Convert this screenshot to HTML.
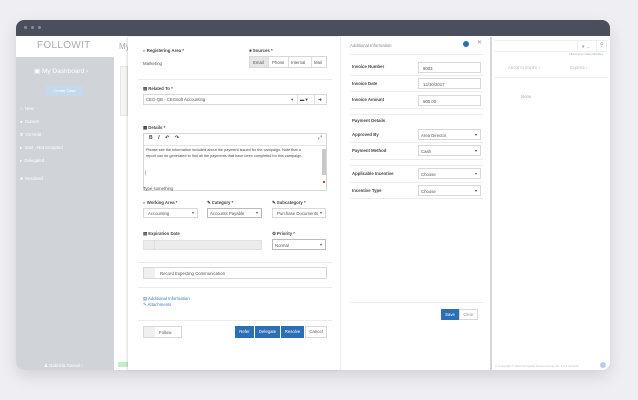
<!DOCTYPE html>
<html><head><meta charset="utf-8"><style>
*{margin:0;padding:0;box-sizing:border-box}
body{width:638px;height:400px;background:#efeff3;font-family:"Liberation Sans",sans-serif;position:relative;overflow:hidden;color:#555}
.a{position:absolute}
.t{position:absolute;font-size:4.3px;white-space:nowrap;line-height:5px}
.b{font-weight:bold;color:#444}
.in{position:absolute;border:1px solid #d8d8d8;background:#fff}
.dv{position:absolute;height:1px;background:#ececec}
.car{position:absolute;right:3px;top:50%;margin-top:-1px;border-left:1.5px solid transparent;border-right:1.5px solid transparent;border-top:2px solid #555}
.btn{position:absolute;background:#2d6fb5;color:#fff;font-size:4.3px;text-align:center;line-height:12px}
</style></head><body>
<div class="a" style="left:16px;top:20px;width:594px;height:350px;border-radius:8px;background:#fff;box-shadow:0 6px 16px rgba(0,0,0,.12);overflow:hidden">
 <div class="a" style="left:0;top:0;width:594px;height:16px;background:#4b4e5c"></div>
 <div class="a" style="left:8px;top:6px;width:3px;height:3px;border-radius:2px;background:#8a8d98"></div>
 <div class="a" style="left:15px;top:6px;width:3px;height:3px;border-radius:2px;background:#8a8d98"></div>
 <div class="a" style="left:22px;top:6px;width:3px;height:3px;border-radius:2px;background:#8a8d98"></div>
 <div class="a" style="left:0;top:37px;width:98px;height:313px;background:#d0d4d9"></div>
</div>
<div class="t" style="left:37px;top:40px;font-size:10px;line-height:12px;color:#aaa;letter-spacing:.3px">FOLLOWIT</div>
<div class="t" style="left:34px;top:68px;font-size:6.5px;line-height:7px;color:#fff">&#9635; My Dashboard &#8250;</div>
<div class="a" style="left:46px;top:85px;width:37px;height:11px;background:#c4d9ec;color:#fff;font-size:4px;text-align:center;line-height:11px">Create Case</div>
<div class="t" style="left:20px;top:106px;color:#fff">○ &nbsp;New</div>
<div class="t" style="left:20px;top:119px;color:#fff">● &nbsp;Current</div>
<div class="t" style="left:20px;top:132px;color:#fff">⧗ &nbsp;On Hold</div>
<div class="t" style="left:20px;top:145px;color:#fff">▸ &nbsp;Sent - Not Accepted</div>
<div class="t" style="left:20px;top:158px;color:#fff">▸ &nbsp;Delegated</div>
<div class="t" style="left:20px;top:176px;color:#fff">■ &nbsp;Resolved</div>
<div class="t" style="left:44px;top:363px;color:#fff">&#9823; Gabriela Goecel &#8250;</div>
<div class="t" style="left:119px;top:42px;font-size:8px;line-height:9px;color:#aaa">My</div>
<div class="a" style="left:120px;top:66px;width:8px;height:50px;background:#f5f5f5;border:1px solid #e6e6e6"></div>
<div class="a" style="left:118px;top:362px;width:10px;height:5px;background:#c8ecc8"></div>

<!-- panel 1 -->
<div class="a" style="left:128px;top:37px;width:212px;height:333px;background:#fff;box-shadow:-1px 0 2px rgba(0,0,0,.15)"></div>
<div class="t b" style="left:143px;top:48px">◐ Registering Area *</div>
<div class="t" style="left:143px;top:61px">Marketing</div>
<div class="t b" style="left:249px;top:48px">■ Sources *</div>
<div class="in" style="left:249px;top:56px;width:78px;height:12px;background:#fff"></div>
<div class="a" style="left:250px;top:57px;width:18px;height:10px;background:#e6e6e6"></div>
<div class="t" style="left:253px;top:60px">Email</div><div class="t" style="left:272px;top:60px">Phone</div><div class="t" style="left:291px;top:60px">Internal</div><div class="t" style="left:314px;top:60px">Mail</div>
<div class="a" style="left:268px;top:57px;width:1px;height:10px;background:#ddd"></div><div class="a" style="left:288px;top:57px;width:1px;height:10px;background:#ddd"></div><div class="a" style="left:311px;top:57px;width:1px;height:10px;background:#ddd"></div>
<div class="dv" style="left:138px;top:79px;width:194px"></div>
<div class="t b" style="left:143px;top:86px">▤ Related To *</div>
<div class="in" style="left:143px;top:94px;width:184px;height:11px"></div>
<div class="t" style="left:146px;top:97px">CEG-QB - CEGsoft Accounting</div>
<div class="t" style="left:291px;top:97px">▾</div>
<div class="a" style="left:297px;top:94px;width:1px;height:11px;background:#ddd"></div><div class="a" style="left:314px;top:94px;width:1px;height:11px;background:#ddd"></div>
<div class="t b" style="left:300px;top:97px">▬ ▾</div><div class="t b" style="left:318px;top:97px">➜</div>
<div class="t b" style="left:143px;top:125px">▦ Details *</div>
<div class="in" style="left:143px;top:133px;width:184px;height:58px"></div>
<div class="dv" style="left:144px;top:145px;width:182px;background:#e4e4e4"></div>
<div class="t b" style="left:149px;top:136px;font-size:5px">B &nbsp;&nbsp;&nbsp;<i>I</i> &nbsp;&nbsp;&nbsp;↶ &nbsp;&nbsp;&nbsp;↷</div>
<div class="t" style="left:318px;top:136px;font-size:5px">⤢</div>
<div class="t" style="left:146px;top:148px;font-size:3.8px;color:#444">Please see the information included about the payment issued for the campaign. Note that a</div>
<div class="t" style="left:146px;top:154px;font-size:3.8px;color:#444">report can be generated to find all the payments that have been completed for this campaign.</div>
<div class="t" style="left:145px;top:170px">|</div>
<div class="a" style="left:322px;top:149px;width:4px;height:26px;background:#c8c8c8"></div>
<div class="a" style="left:323px;top:181px;width:2px;height:2px;background:#d33"></div>
<div class="t" style="left:143px;top:186px">Type something</div>
<div class="t b" style="left:143px;top:200px">◐ Working Area *</div>
<div class="t b" style="left:207px;top:200px">✎ Category *</div>
<div class="t b" style="left:272px;top:200px">✎ Subcategory *</div>
<div class="in" style="left:143px;top:208px;width:55px;height:10px"><span class="t" style="left:4px;top:2px">Accounting</span><span class="car"></span></div>
<div class="in" style="left:207px;top:208px;width:55px;height:10px;border-color:#bbb"><span class="t" style="left:2px;top:2px">Accounts Payable</span><span class="car"></span></div>
<div class="in" style="left:272px;top:208px;width:54px;height:10px"><span class="t" style="left:4px;top:2px">Purchase Documents</span><span class="car"></span></div>
<div class="t b" style="left:143px;top:231px">▤ Expiration Date</div>
<div class="a" style="left:143px;top:240px;width:119px;height:10px;background:#ececec;border:1px solid #e0e0e0"></div>
<div class="a" style="left:154px;top:240px;width:1px;height:10px;background:#ddd"></div>
<div class="t b" style="left:272px;top:231px">⚙ Priority *</div>
<div class="in" style="left:272px;top:239px;width:54px;height:11px;border-color:#bbb"><span class="t" style="left:2px;top:3px">Normal</span><span class="car"></span></div>
<div class="dv" style="left:138px;top:262px;width:194px"></div>
<div class="in" style="left:143px;top:267px;width:184px;height:12px"><span class="a" style="left:0;top:0;width:11px;height:10px;background:#f0f0f0"></span><span class="t" style="left:16px;top:3px">Record Expecting Communication</span></div>
<div class="dv" style="left:138px;top:287px;width:194px"></div>
<div class="t" style="left:143px;top:296px;color:#3b7cc4">▤ Additional Information</div>
<div class="t" style="left:143px;top:302px;color:#3b7cc4">✎ Attachments</div>
<div class="dv" style="left:138px;top:320px;width:194px"></div>
<div class="in" style="left:143px;top:326px;width:39px;height:12px"><span class="a" style="left:0;top:0;width:11px;height:10px;background:#f0f0f0"></span><span class="t" style="left:15px;top:3px">Follow</span></div>
<div class="btn" style="left:235px;top:326px;width:19px;height:12px">Refer</div>
<div class="btn" style="left:255px;top:326px;width:25px;height:12px">Delegate</div>
<div class="btn" style="left:281px;top:326px;width:23px;height:12px">Resolve</div>
<div class="in" style="left:305px;top:326px;width:22px;height:12px;text-align:center;font-size:4.3px;line-height:10px">Cancel</div>

<!-- panel 2 -->
<div class="a" style="left:340px;top:37px;width:152px;height:333px;background:#fff;border-left:1px solid #eee;border-right:2px solid #d6d6d6"></div>
<div class="t" style="left:350px;top:43px;color:#888">Additional Information</div>
<div class="a" style="left:463px;top:41px;width:6px;height:6px;border-radius:3px;background:#2d6fb5"></div>
<div class="t" style="left:477px;top:41px;font-size:6px;color:#999">✕</div>
<div class="dv" style="left:350px;top:54px;width:133px"></div>
<div class="t b" style="left:352px;top:64px">Invoice Number</div><div class="in" style="left:418px;top:62px;width:63px;height:11px"><span class="t" style="left:4px;top:3px">8003</span></div>
<div class="dv" style="left:350px;top:75px;width:133px"></div>
<div class="t b" style="left:352px;top:81px">Invoice Date</div><div class="in" style="left:418px;top:78px;width:63px;height:11px"><span class="t" style="left:4px;top:3px">12/30/2017</span></div>
<div class="dv" style="left:350px;top:91px;width:133px"></div>
<div class="t b" style="left:352px;top:97px">Invoice Amount</div><div class="in" style="left:418px;top:95px;width:63px;height:11px"><span class="t" style="left:4px;top:3px">500.00</span></div>
<div class="dv" style="left:350px;top:108px;width:133px"></div>
<div class="dv" style="left:350px;top:114px;width:133px"></div>
<div class="t b" style="left:352px;top:118px">Payment Details</div>
<div class="t b" style="left:352px;top:132px">Approved By</div><div class="in" style="left:418px;top:129px;width:63px;height:11px"><span class="t" style="left:2px;top:3px">Area Director</span><span class="car"></span></div>
<div class="dv" style="left:350px;top:142px;width:133px"></div>
<div class="t b" style="left:352px;top:148px">Payment Method</div><div class="in" style="left:418px;top:145px;width:63px;height:11px"><span class="t" style="left:2px;top:3px">Cash</span><span class="car"></span></div>
<div class="dv" style="left:350px;top:159px;width:133px"></div>
<div class="dv" style="left:350px;top:165px;width:133px"></div>
<div class="t b" style="left:352px;top:171px">Applicable Incentive</div><div class="in" style="left:418px;top:168px;width:63px;height:11px"><span class="t" style="left:2px;top:3px">Choose</span><span class="car"></span></div>
<div class="dv" style="left:350px;top:182px;width:133px"></div>
<div class="t b" style="left:352px;top:188px">Incentive Type</div><div class="in" style="left:418px;top:185px;width:63px;height:11px"><span class="t" style="left:2px;top:3px">Choose</span><span class="car"></span></div>
<div class="dv" style="left:350px;top:198px;width:133px"></div>
<div class="dv" style="left:350px;top:302px;width:133px"></div>
<div class="btn" style="left:441px;top:309px;width:18px;height:11px;line-height:11px">Save</div>
<div class="in" style="left:459px;top:309px;width:19px;height:11px;text-align:center;font-size:4.3px;line-height:9px;color:#999">Clear</div>

<!-- right -->
<div class="a" style="left:494px;top:40px;width:113px;height:12px;border:1px solid #eee;border-left:none"></div>
<div class="a" style="left:577px;top:40px;width:1px;height:12px;background:#eee"></div><div class="a" style="left:596px;top:40px;width:1px;height:12px;background:#eee"></div>
<div class="t" style="left:581px;top:44px;color:#999">▼ ⌄</div><div class="t" style="left:600px;top:43px;color:#999;font-size:5px">⚲</div>
<div class="t" style="left:569px;top:52px;font-size:3px;color:#aaa">Filtering by <span style="color:#7aa7d8">Case Number</span></div>
<div class="t" style="left:508px;top:65px;color:#bbb">About to Expire ↕</div>
<div class="t" style="left:570px;top:65px;color:#bbb">Expired ↕</div>
<div class="a" style="left:494px;top:77px;width:113px;height:1px;background:#f0f0f0"></div>
<div class="t" style="left:521px;top:94px;color:#aaa">None</div>
<div class="t" style="left:495px;top:364px;font-size:3px;color:#bbb">© Copyright © 2017 Computer Expert Group Inc. 2.8.1 Cerisoft</div>
<div class="a" style="left:600px;top:362px;width:6px;height:6px;border-radius:3px;background:#b8cde6"></div>
</body></html>
